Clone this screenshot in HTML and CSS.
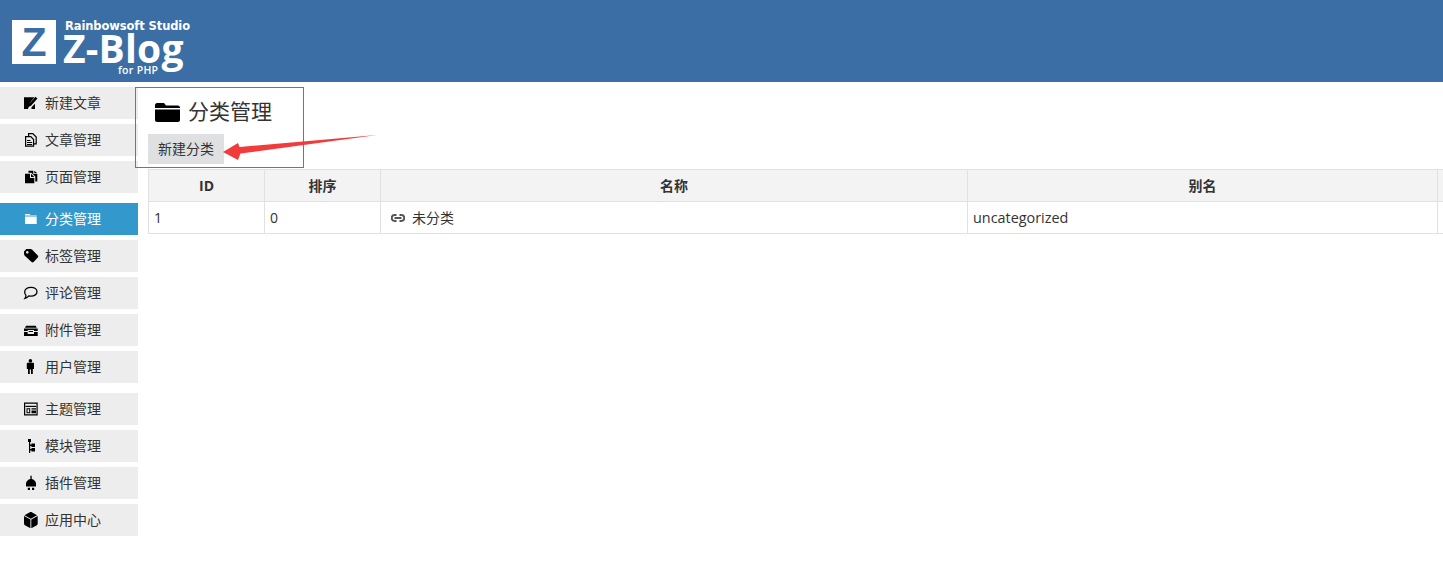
FILE: index.html
```html
<!DOCTYPE html>
<html lang="zh-CN">
<head>
<meta charset="utf-8">
<title>分类管理</title>
<link rel="stylesheet" href="styles.css">
</head>
<body>
<header class="top">
  <div class="logo-mark">Z</div>
  <div class="logo-text">
    <div class="logo-studio">Rainbowsoft Studio</div>
    <div class="logo-name">Z-Blog</div>
    <div class="logo-php">for PHP</div>
  </div>
</header>
<div class="layout">
  <nav class="side">
    <div class="group">
      <a class="item"><svg class="ico" viewBox="0 0 16 16"><path d="M1 2.300h10.500L7.500 7 5.500 12.500l-.5 1.500H1z"/><path d="M12.500 1.800l2 1.800-6.500 7.200-2.800 1.200.9-3zM8.500 12.300l3.500-3.500V14H8.500z"/></svg><span>新建文章</span></a>
      <a class="item"><svg class="ico" viewBox="0 0 16 16"><path fill="none" stroke="#000" stroke-width="1.200" d="M2.600 4.700h5.200l2.800 2.800v6.700h-8zM5.600 4.500V1.600h4.200l3.400 3.400v6.800h-2.400"/><path d="M4 8h3.500v1.100H4zM4 10h5.200v1.100H4zM4 12h5.200v1.100H4z"/></svg><span>文章管理</span></a>
      <a class="item"><svg class="ico" viewBox="0 0 16 16"><path d="M2 4.800h5V9h4.300v5.300H2zM8 4.800l3.300 3.300H8zM5.500 1.700h4.800v3.300h4v7.500h-2V7.500L8.300 3.800H5.500zM11.300 1.700l3 2.600h-3z"/></svg><span>页面管理</span></a>
    </div>
    <div class="group">
      <a class="item active"><svg class="ico" viewBox="0 0 16 16"><path fill="#fff" d="M2 4.500V3h4.500l1 1h6.200v.5zM2 5.500h11.700V13H2z"/></svg><span>分类管理</span></a>
      <a class="item"><svg class="ico" viewBox="0 0 16 16"><path fill-rule="evenodd" d="M1 3.500 3.300 1H7.500c.6 0 1.100.2 1.500.6l5.800 6c.6.600.6 1.400 0 2l-4.200 4.500c-.6.600-1.400.6-2 0L2 8c-.6-.5-1-1.200-1-2zM4.300 3a1.300 1.300 0 1 0 .01 0z"/></svg><span>标签管理</span></a>
      <a class="item"><svg class="ico" viewBox="0 0 16 16"><path fill="none" stroke="#000" stroke-width="1.300" d="M8 2.300c3.500 0 6 1.900 6 4.400s-2.600 4.500-6 4.500c-.8 0-1.500-.1-2.200-.3-.9 1.100-2.200 2.100-3.800 2.500.7-1 1-2 .9-3.200C1.800 9.500 1.700 8 1.700 6.700c0-2.500 2.800-4.400 6.300-4.400z"/></svg><span>评论管理</span></a>
      <a class="item"><svg class="ico" viewBox="0 0 16 16"><path d="M3 3.700h9.700l1 2H2zM1 6.500h13.700V9H11V8H4.700v1H1zM1 10h3.700v2h6.300v-2h3.700v4H1zM5.700 9H10v1H5.700z"/></svg><span>附件管理</span></a>
      <a class="item"><svg class="ico" viewBox="0 0 16 16"><circle cx="7.400" cy="1.900" r="1.800"/><path d="M4.800 3.800h5.200c.6 0 1 .4 1 1v5.200H9.800V15H8v-4.500h-1.200V15H5V10H3.800V4.800c0-.6.400-1 1-1z"/></svg><span>用户管理</span></a>
    </div>
    <div class="group">
      <a class="item"><svg class="ico" viewBox="0 0 16 16"><path fill-rule="evenodd" d="M1 1.500h13.700v13H1zM2.200 2.700v10.600h11.300V2.700z"/><path d="M2.500 4.800h10.700v1.200H2.500z"/><path fill-rule="evenodd" d="M3.500 7.200h3.700v5H3.500zM4.500 8.200v3h1.700v-3z"/><path d="M8.500 7.200h4.500v1.200H8.500zM8.500 9.500h4.500v2.700H8.500z"/></svg><span>主题管理</span></a>
      <a class="item"><svg class="ico" viewBox="0 0 16 16"><path d="M5 1h3v3h-.8v2.500H8.500V5.500H12V9H8.500V8H7.200v3H8.500v-1H12v3.500H8.500V12.500H7.200V15H6V4H5z"/></svg><span>模块管理</span></a>
      <a class="item"><svg class="ico" viewBox="0 0 16 16"><path d="M7.400 .8h1.300V4c2.300.5 4.300 2.400 4.300 4.500V11.500H3V8.500C3 6.400 5.100 4.500 7.400 4zM4.800 12.800h2.200V15H4.800zM9 12.800h2.200V15H9z"/></svg><span>插件管理</span></a>
      <a class="item"><svg class="ico" viewBox="0 0 16 16"><path d="M7.800 0c.4 0 .7.100 1 .3l5.300 2.900-6.300 3.500L1.500 3.200 6.800.3c.3-.2.600-.3 1-.3zM1 4l6.400 3.500V16c-.3 0-.6-.1-.9-.2l-4.600-2.500C1.300 13 1 12.400 1 11.800zM14.700 4v7.800c0 .6-.3 1.200-.9 1.500l-4.600 2.500c-.3.100-.6.200-.9.200V7.500z"/></svg><span>应用中心</span></a>
    </div>
  </nav>
  <main class="main">
    <h1 class="title"><svg class="title-ico" viewBox="0 0 25 19"><path d="M0 5V2C0 1 1 0 2 0h7l2 2.500h12c1 0 2 1 2 2V5zM0 6.500h25V17c0 1-1 2-2 2H2c-1 0-2-1-2-2z"/></svg><span>分类管理</span></h1>
    <a class="btn">新建分类</a>
    <table class="grid">
      <colgroup><col class="c-id"><col class="c-order"><col class="c-name"><col class="c-alias"><col class="c-rest"></colgroup>
      <thead><tr><th>ID</th><th>排序</th><th>名称</th><th>别名</th><th></th></tr></thead>
      <tbody><tr>
        <td>1</td><td>0</td>
        <td><span class="cat"><svg class="link-ico" viewBox="0 0 14 8"><path fill="none" stroke="#555" stroke-width="2" d="M5.500 1.100H3.600a2.900 2.900 0 0 0 0 5.800h1.900M8.500 1.100h1.900a2.900 2.900 0 0 1 0 5.800H8.500M3.500 4h7"/></svg>未分类</span></td>
        <td class="slug">uncategorized</td><td></td>
      </tr></tbody>
    </table>
  </main>
</div>
<div class="note-box"></div>
<svg class="note-arrow" viewBox="0 0 160 30"><path fill="#f23c3c" d="M1 18 16 9l1.500 4L155 1 18.500 19.500 16 26z"/></svg>
</body>
</html>
```
FILE: styles.css
```css
* { box-sizing: border-box; }
html, body { margin: 0; height: 100%; overflow: hidden; }
body {
  font-family: "Open Sans", "Noto Sans CJK SC", sans-serif;
  font-size: 14px;
  color: #333;
  background: #fff;
}
.top {
  height: 82px;
  background: #3a6ea5;
  display: flex;
  padding: 20px 0 0 12px;
  color: #fff;
}
.logo-mark {
  width: 44px;
  height: 44px;
  background: #fff;
  color: #3a6ea5;
  font: 700 41px/44px "Liberation Sans", sans-serif;
  text-align: center;
}
.logo-text { margin-left: 7px; display: flex; flex-direction: column; }
.logo-studio { font: 700 11.500px/12px "DejaVu Sans", sans-serif; margin-left: 2px; white-space: nowrap; letter-spacing: -.1px; }
.logo-name { font: 700 39px/32px "Open Sans", sans-serif; letter-spacing: .2px; white-space: nowrap; }
.logo-php { font: 600 10.500px/12px "Open Sans", sans-serif; margin-left: 55px; letter-spacing: .3px; white-space: nowrap; }
.layout { display: flex; }
.side { width: 138px; flex: none; padding-top: 5px; display: flex; flex-direction: column; gap: 10px; }
.group { display: flex; flex-direction: column; gap: 5px; }
.item {
  height: 32px;
  background: #ededed;
  display: flex;
  align-items: center;
  padding-left: 23px;
  gap: 6px;
  color: #333;
}
.item span { padding-bottom: 2px; }
.item.active { background: #3399cc; color: #fff; }
.ico { width: 16px; height: 16px; flex: none; }
.main { flex: 1; min-width: 0; padding-left: 10px; overflow: hidden; }
.title {
  margin: 0;
  height: 52px;
  padding: 12px 0 0 7px;
  display: flex;
  align-items: flex-start;
  font-size: 21px;
  font-weight: 400;
  line-height: 34px;
  color: #333;
}
.title-ico { width: 25px; height: 19px; margin: 9px 8px 0 0; flex: none; }
.btn {
  display: block;
  width: 76px;
  height: 30px;
  line-height: 30px;
  background: #dfe0e1;
  text-align: center;
  color: #333;
}
.grid {
  margin-top: 5px;
  width: 1400px;
  table-layout: fixed;
  border-collapse: collapse;
}
.c-id, .c-order { width: 116px; }
.c-name { width: 587px; }
.c-alias { width: 470px; }
.grid th, .grid td {
  border: 1px solid #e1e1e1;
  height: 32px;
  padding: 0 5px;
  font-size: 14px;
  line-height: 20px;
}
.grid th { background: #f3f3f3; font-weight: 700; text-align: center; }
.grid td { text-align: left; }
.grid td.slug { font-size: 14.400px; }
.cat { display: flex; align-items: center; margin-left: 5px; }
.link-ico { width: 14px; height: 8px; margin-right: 7px; flex: none; }
.note-box {
  position: absolute;
  left: 135px;
  top: 87px;
  width: 169px;
  height: 81px;
  border: 1px solid #f04040;
}
.note-arrow {
  position: absolute;
  left: 222px;
  top: 134px;
  width: 160px;
  height: 30px;
}
```
